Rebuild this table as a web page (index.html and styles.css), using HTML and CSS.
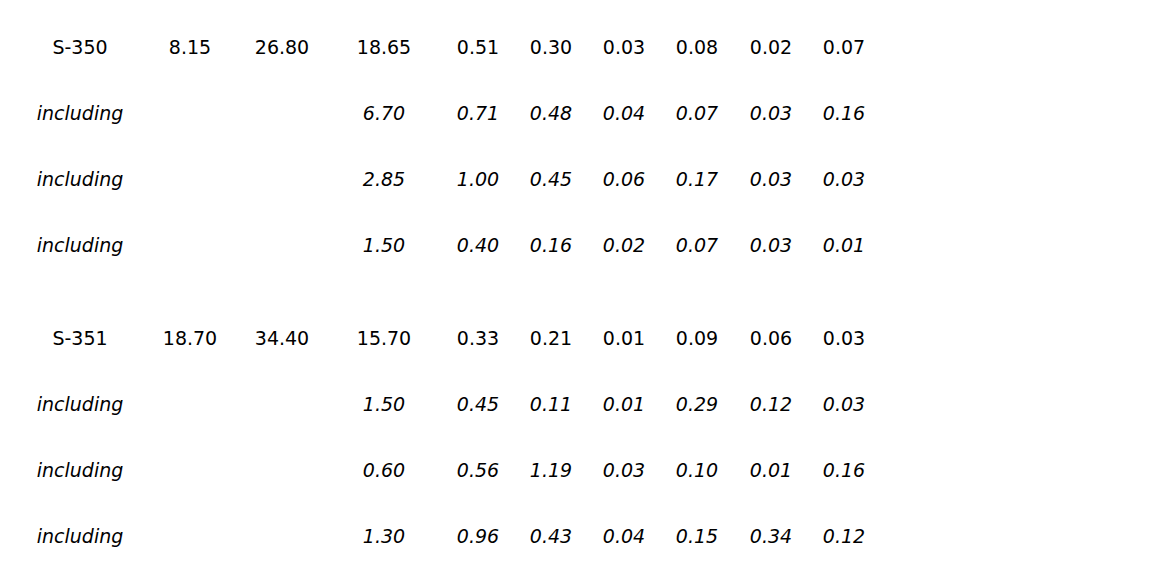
FILE: index.html
```html
<!DOCTYPE html>
<html>
<head>
<meta charset="utf-8">
<link rel="stylesheet" href="styles.css">
</head>
<body>
<table class="assay">
  <colgroup>
    <col class="c1"><col class="c2"><col class="c3"><col class="c4"><col class="c5">
    <col class="c6"><col class="c7"><col class="c8"><col class="c9"><col class="c10">
  </colgroup>
  <tbody>
    <tr class="main"><td>S-350</td><td>8.15</td><td>26.80</td><td>18.65</td><td>0.51</td><td>0.30</td><td>0.03</td><td>0.08</td><td>0.02</td><td>0.07</td></tr>
    <tr class="sub"><td>including</td><td></td><td></td><td>6.70</td><td>0.71</td><td>0.48</td><td>0.04</td><td>0.07</td><td>0.03</td><td>0.16</td></tr>
    <tr class="sub"><td>including</td><td></td><td></td><td>2.85</td><td>1.00</td><td>0.45</td><td>0.06</td><td>0.17</td><td>0.03</td><td>0.03</td></tr>
    <tr class="sub"><td>including</td><td></td><td></td><td>1.50</td><td>0.40</td><td>0.16</td><td>0.02</td><td>0.07</td><td>0.03</td><td>0.01</td></tr>
    <tr class="spacer"><td colspan="10"></td></tr>
    <tr class="main"><td>S-351</td><td>18.70</td><td>34.40</td><td>15.70</td><td>0.33</td><td>0.21</td><td>0.01</td><td>0.09</td><td>0.06</td><td>0.03</td></tr>
    <tr class="sub"><td>including</td><td></td><td></td><td>1.50</td><td>0.45</td><td>0.11</td><td>0.01</td><td>0.29</td><td>0.12</td><td>0.03</td></tr>
    <tr class="sub"><td>including</td><td></td><td></td><td>0.60</td><td>0.56</td><td>1.19</td><td>0.03</td><td>0.10</td><td>0.01</td><td>0.16</td></tr>
    <tr class="sub"><td>including</td><td></td><td></td><td>1.30</td><td>0.96</td><td>0.43</td><td>0.04</td><td>0.15</td><td>0.34</td><td>0.12</td></tr>
  </tbody>
</table>
</body>
</html>
```

FILE: styles.css
```css
html, body {
  background: #ffffff;
}
body {
  margin: 0;
  padding: 14px 8px 0 8px;
  font-family: "DejaVu Sans", Verdana, sans-serif;
  font-size: 19px;
  color: #000000;
}
.assay {
  border-collapse: collapse;
  table-layout: fixed;
  width: 862px;
}
.c1 { width: 144px; }
.c2 { width: 76px; }
.c3 { width: 108px; }
.c4 { width: 96px; }
.c5 { width: 92px; }
.c6 { width: 54px; }
.c7 { width: 92px; }
.c8 { width: 54px; }
.c9 { width: 94px; }
.c10 { width: 52px; }
.assay td {
  height: 66px;
  padding: 0;
  text-align: center;
  vertical-align: middle;
  white-space: nowrap;
}
.assay tr.sub td {
  font-style: italic;
}
.assay tr.spacer td {
  height: 27px;
}
```
